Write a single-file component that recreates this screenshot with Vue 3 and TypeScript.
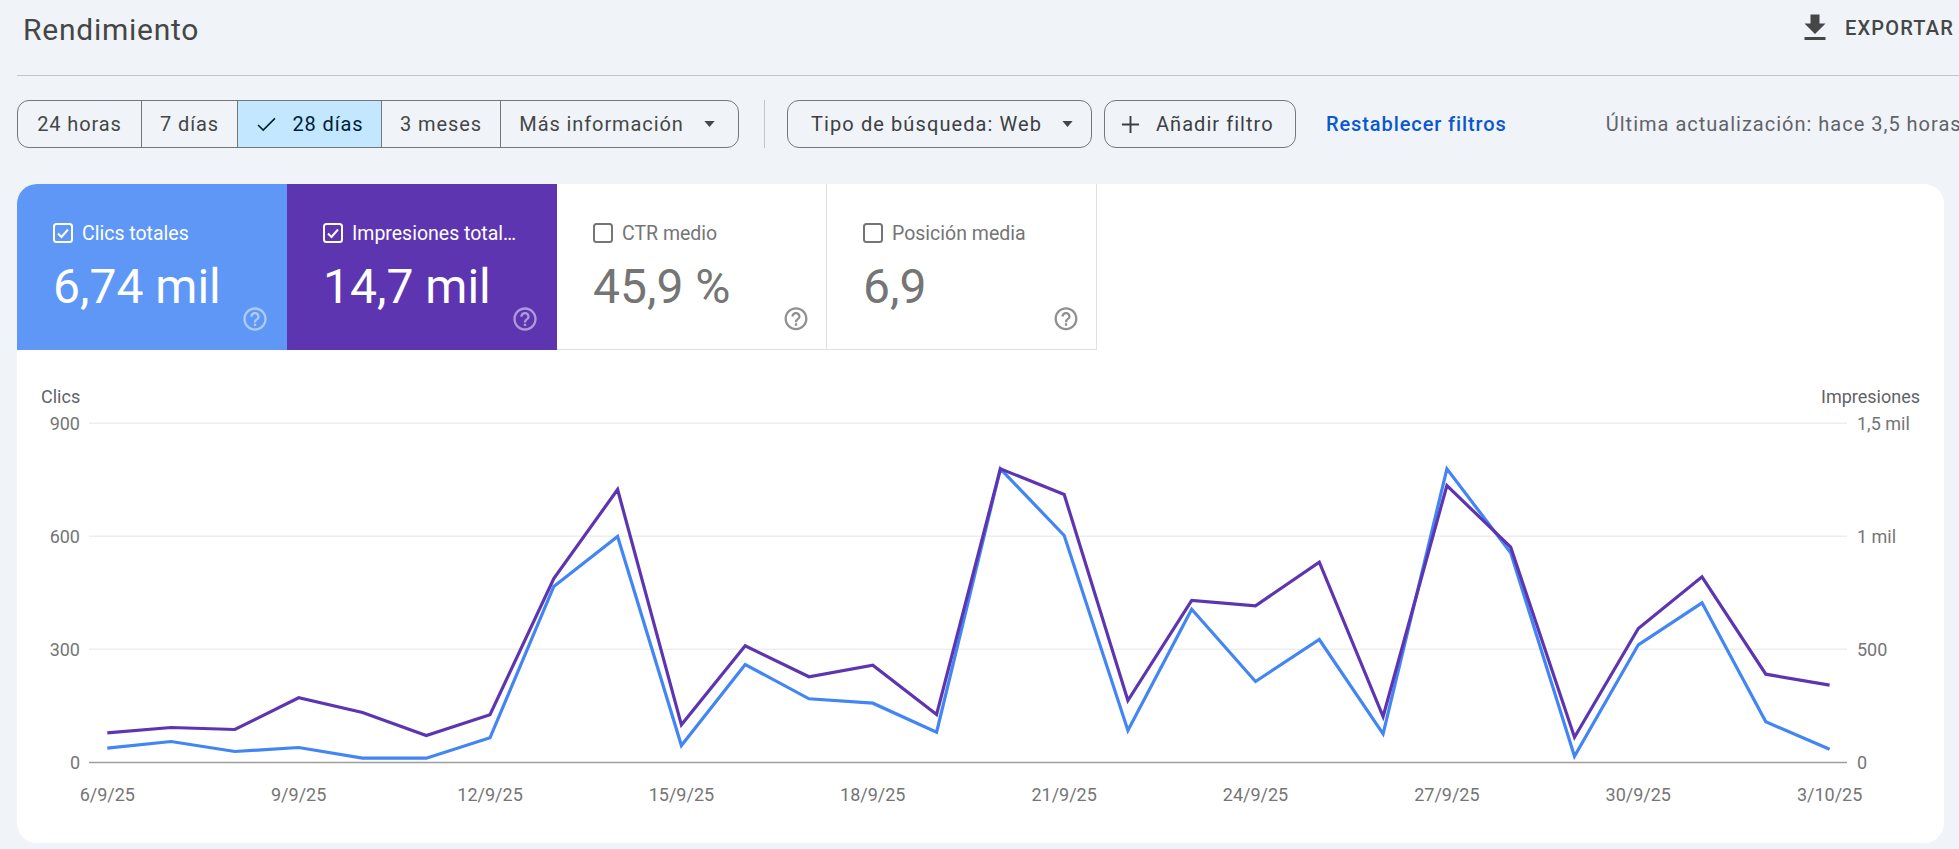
<script setup lang="ts">
import { computed } from 'vue'

interface Metric {
  label: string
  value: string
  tone: 'blue' | 'purple' | 'plain'
  checked: boolean
}

const metrics: Metric[] = [
  { label: 'Clics totales', value: '6,74 mil', tone: 'blue', checked: true },
  { label: 'Impresiones totales', value: '14,7 mil', tone: 'purple', checked: true },
  { label: 'CTR medio', value: '45,9 %', tone: 'plain', checked: false },
  { label: 'Posición media', value: '6,9', tone: 'plain', checked: false },
]

const ranges = [
  { label: '24 horas', cls: 'r-24' },
  { label: '7 días', cls: 'r-7' },
  { label: '28 días', cls: 'r-28', active: true },
  { label: '3 meses', cls: 'r-3' },
]

const helpPath =
  'M11 18h2v-2h-2v2zm1-16C6.48 2 2 6.48 2 12s4.48 10 10 10 10-4.48 10-10S17.52 2 12 2zm0 18c-4.41 0-8-3.59-8-8s3.59-8 8-8 8 3.59 8 8-3.59 8-8 8zm0-14c-2.21 0-4 1.79-4 4h2c0-1.1.9-2 2-2s2 .9 2 2c0 2-3 1.75-3 5h2c0-2.25 3-2.5 3-5 0-2.21-1.79-4-4-4z'

// Vertical positions are read in reference pixels relative to the chart's top edge (card tile bottom = 350).
const toY = (z: number) => 370.5 + z / 3 - 350
const x0 = 90.3
const step = 63.79
const xAt = (i: number) => x0 + i * step

const blue = [1133, 1113, 1143, 1131, 1163, 1163, 1102, 648, 498, 1125, 882, 985, 998, 1085, 295, 495, 1080, 716, 933, 807, 1090, 295, 547, 1157, 823, 697, 1054, 1136]
const purple = [1087, 1071, 1077, 982, 1026, 1095, 1033, 624, 357, 1063, 826, 919, 884, 1032, 295, 372, 990, 690, 706, 575, 1038, 345, 530, 1100, 774, 619, 911, 944]

const toPoints = (s: number[]) => s.map((v, i) => `${xAt(i).toFixed(1)},${toY(v).toFixed(1)}`).join(' ')
const bluePoints = computed(() => toPoints(blue))
const purplePoints = computed(() => toPoints(purple))

const grid = [
  { y: 73.2, left: '900', right: '1,5 mil' },
  { y: 186.2, left: '600', right: '1 mil' },
  { y: 299.2, left: '300', right: '500' },
]

const dates = ['6/9/25', '9/9/25', '12/9/25', '15/9/25', '18/9/25', '21/9/25', '24/9/25', '27/9/25', '30/9/25', '3/10/25']
</script>

<template>
  <div class="page">
    <header class="head">
      <h1 class="title">Rendimiento</h1>
      <div class="export">
        <svg class="export-icon" viewBox="0 0 24 24"><path d="M19 9h-4V3H9v6H5l7 7 7-7zM5 18v2h14v-2H5z" /></svg>
        <span>EXPORTAR</span>
      </div>
    </header>

    <div class="toolbar">
      <div class="segments">
        <div v-for="r in ranges" :key="r.label" class="seg" :class="[r.cls, { on: r.active }]">
          <svg v-if="r.active" class="tick" viewBox="0 0 20 16"><path d="M1 8.5 6.5 14 19 1.5" /></svg>
          <span>{{ r.label }}</span>
        </div>
        <div class="seg r-more">
          <span>Más información</span>
          <svg class="caret" viewBox="0 0 12 7"><path d="M0 0h12L6 7z" /></svg>
        </div>
      </div>
      <div class="sep"></div>
      <div class="chip chip-type">
        <span>Tipo de búsqueda: Web</span>
        <svg class="caret" viewBox="0 0 12 7"><path d="M0 0h12L6 7z" /></svg>
      </div>
      <div class="chip chip-add">
        <svg class="plus" viewBox="0 0 20 20"><path d="M10 1v18M1 10h18" /></svg>
        <span>Añadir filtro</span>
      </div>
      <span class="reset">Restablecer filtros</span>
      <span class="updated">Última actualización: hace 3,5 horas</span>
    </div>

    <section class="card">
      <div class="tiles">
        <div v-for="m in metrics" :key="m.label" class="tile" :class="m.tone">
          <div class="tile-label">
            <svg class="box" viewBox="0 0 20 20">
              <rect x="1" y="1" width="18" height="18" rx="2.5" />
              <path v-if="m.checked" d="M5 10.5 8.5 14 15 6.5" />
            </svg>
            <span class="label-text">{{ m.label }}</span>
          </div>
          <div class="tile-value">{{ m.value }}</div>
          <svg class="help" viewBox="0 0 24 24"><path :d="helpPath" /></svg>
        </div>
      </div>

      <svg class="chart" viewBox="0 0 1927 493" width="1927" height="493">
        <text x="24" y="53" class="axis-title">Clics</text>
        <text x="1903" y="53" text-anchor="end" class="axis-title">Impresiones</text>
        <g v-for="g in grid" :key="g.y">
          <line x1="72" :y1="g.y" x2="1830" :y2="g.y" class="grid" />
          <text x="63" :y="g.y + 6.5" text-anchor="end" class="tick-label">{{ g.left }}</text>
          <text x="1840" :y="g.y + 6.5" class="tick-label">{{ g.right }}</text>
        </g>
        <line x1="72" y1="412.5" x2="1830" y2="412.5" class="base" />
        <text x="63" y="419" text-anchor="end" class="tick-label">0</text>
        <text x="1840" y="419" class="tick-label">0</text>
        <text v-for="(d, i) in dates" :key="d" :x="xAt(i * 3)" y="451" text-anchor="middle" class="tick-label">{{ d }}</text>
        <polyline :points="bluePoints" class="line line-blue" />
        <polyline :points="purplePoints" class="line line-purple" />
      </svg>
    </section>
  </div>
</template>

<style>
html,
body {
  margin: 0;
  background: #f0f4f9;
}
</style>

<style scoped>
.page {
  width: 1959px;
  height: 849px;
  overflow: hidden;
  background: #f0f4f9;
  font-family: Roboto, "Liberation Sans", sans-serif;
  color: #3c4043;
}
.head {
  display: flex;
  align-items: center;
  justify-content: space-between;
  box-sizing: border-box;
  height: 76px;
  margin-left: 17px;
  padding: 0 5px 16px 6px;
  border-bottom: 1px solid #c4c7c9;
}
.title {
  margin: 0;
  font-size: 30px;
  font-weight: 400;
  letter-spacing: 0.75px;
  color: #444746;
  white-space: nowrap;
}
.export {
  display: flex;
  align-items: center;
  gap: 12px;
  font-size: 20px;
  font-weight: 500;
  letter-spacing: 1.2px;
  color: #444746;
  margin-top: -4px;
}
.export-icon {
  width: 36px;
  height: 36px;
  fill: #444746;
}
.toolbar {
  display: flex;
  align-items: center;
  height: 48px;
  margin: 24px 0 36px 17px;
  white-space: nowrap;
  font-size: 20px;
  letter-spacing: 0.9px;
}
.toolbar > * {
  flex: none;
}
.segments {
  display: flex;
  box-sizing: border-box;
  width: 722px;
  height: 48px;
  border: 1px solid #747775;
  border-radius: 12px;
  overflow: hidden;
}
.seg {
  display: flex;
  align-items: center;
  justify-content: center;
  box-sizing: border-box;
  border-right: 1px solid #747775;
  color: #444746;
}
.seg:last-child {
  border-right: 0;
}
.r-24 { width: 124px; }
.r-7 { width: 96px; }
.r-28 { width: 144px; }
.r-3 { width: 119px; }
.r-more { flex: 1; padding-right: 5px; }
.on {
  background: #c2e7ff;
  color: #001d35;
  gap: 16px;
  padding-left: 2px;
}
.tick {
  width: 19px;
  height: 15px;
  fill: none;
  stroke: #001d35;
  stroke-width: 1.7;
}
.caret {
  width: 11px;
  height: 6px;
  fill: #444746;
}
.r-more .caret {
  margin-left: 20px;
}
.sep {
  width: 1px;
  height: 48px;
  margin: 0 22px 0 25px;
  background: #c4c7c9;
}
.chip {
  display: flex;
  align-items: center;
  box-sizing: border-box;
  height: 48px;
  border: 1px solid #747775;
  border-radius: 12px;
  color: #3c4043;
}
.chip-type {
  width: 305px;
  padding-left: 23px;
  gap: 20px;
  letter-spacing: 1.1px;
}
.chip-add {
  width: 192px;
  margin-left: 12px;
  padding-left: 16px;
  gap: 16px;
  letter-spacing: 1.05px;
}
.plus {
  width: 19px;
  height: 19px;
  fill: none;
  stroke: #3c4043;
  stroke-width: 2;
}
.reset {
  margin-left: 30px;
  color: #0b57d0;
  font-weight: 500;
}
.updated {
  margin-left: 99px;
  color: #5f6368;
  letter-spacing: 1px;
}
.card {
  box-sizing: border-box;
  width: 1927px;
  height: 659px;
  margin-left: 17px;
  background: #fff;
  border-radius: 20px;
  overflow: hidden;
}
.tiles {
  display: flex;
  height: 166px;
}
.tile {
  display: flex;
  flex-direction: column;
  box-sizing: border-box;
  width: 270px;
  height: 166px;
  padding: 38px 18px 17px 36px;
}
.tile.blue {
  background: #5e97f6;
  color: #fff;
}
.tile.purple {
  background: #5e35b1;
  color: #fff;
}
.tile.plain {
  padding-right: 16.5px;
  color: #757575;
  border-right: 1px solid #e0e0e0;
  border-bottom: 1px solid #e0e0e0;
}
.tile-label {
  display: flex;
  align-items: center;
  gap: 9px;
  height: 22px;
  font-size: 19.5px;
}
.label-text {
  width: 165px;
  overflow: hidden;
  white-space: nowrap;
  text-overflow: ellipsis;
}
.box {
  flex: none;
  width: 20px;
  height: 20px;
  fill: none;
  stroke: currentColor;
  stroke-width: 2;
}
.tile-value {
  margin-top: 24.5px;
  font-size: 48px;
  line-height: 36px;
  white-space: nowrap;
}
.help {
  width: 28px;
  height: 28px;
  margin-top: auto;
  align-self: flex-end;
  fill: currentColor;
  opacity: 0.5;
}
.tile.plain .help {
  opacity: 0.8;
}
.chart {
  display: block;
}
.axis-title {
  font-size: 18px;
  fill: #5f6368;
}
.tick-label {
  font-size: 18px;
  fill: #757575;
}
.grid {
  stroke: #eeeeee;
  stroke-width: 1.5;
}
.base {
  stroke: #9e9e9e;
  stroke-width: 1.6;
}
.line {
  fill: none;
  stroke-width: 3.2;
  stroke-linejoin: miter;
}
.line-blue {
  stroke: #4285f4;
}
.line-purple {
  stroke: #5e35b1;
}
</style>
